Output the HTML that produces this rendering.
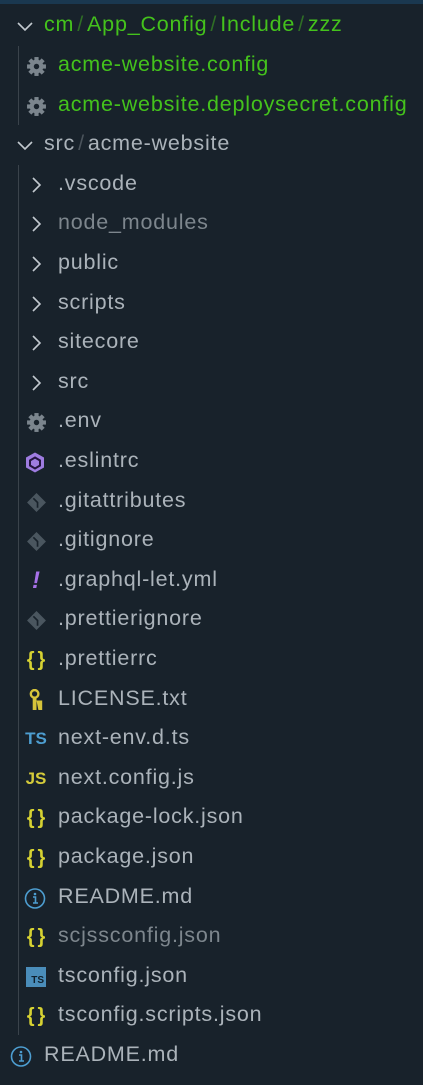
<!DOCTYPE html>
<html><head><meta charset="utf-8"><style>
html,body{margin:0;padding:0;background:#18222b;width:423px;height:1085px;overflow:hidden}
body{font-family:"Liberation Sans",sans-serif;font-size:21.5px;letter-spacing:0.8px;color:#abb3ba;position:relative}
.top{position:absolute;left:0;top:0;width:423px;height:4px;background:#1a3850}
.row{position:absolute;left:0;height:40px;line-height:40px;white-space:nowrap}
.guide{position:absolute;left:18px;width:1px;background:#3a434b}
.ic{position:absolute;top:0;width:22px;height:40px;display:flex;align-items:center;justify-content:center;letter-spacing:0}
.t{position:absolute;top:-2px}
.g{color:#44c21c}
.sl{color:#2f6e25;margin:0 3px}
.sl2{color:#4a535b;margin:0 3px}
.dim{color:#7d868d}
.br{color:#d6d232;font-weight:bold;font-size:20px;letter-spacing:3px;margin-left:3px}
</style></head><body>
<div class="top"></div>
<div class="guide" style="top:46px;height:79px"></div>
<div class="guide" style="top:165px;height:870px"></div>

<div class="row" style="top:6px;width:423px">
<svg class="ic" style="left:14px" viewBox="0 0 22 40"><path d="M4 17l7 7 7-7" stroke="#c2c9cf" stroke-width="1.6" fill="none"/></svg>
<span class="t g" style="left:44px">cm<span class="sl">/</span>App_Config<span class="sl">/</span>Include<span class="sl">/</span>zzz</span></div>

<div id="rows"></div>
<script>
var gear='<svg viewBox="0 0 20 20" width="21" height="21"><g fill="#7b858d"><circle cx="10" cy="10" r="6.5"/><rect x="8" y="1" width="4" height="18"/><rect x="1" y="8" width="18" height="4"/><rect x="8" y="1" width="4" height="18" transform="rotate(45 10 10)"/><rect x="8" y="1" width="4" height="18" transform="rotate(-45 10 10)"/></g><circle cx="10" cy="10" r="2.6" fill="#18222b"/></svg>';
var chev='<svg viewBox="0 0 22 40" width="22" height="40"><path d="M8 13l7 7-7 7" stroke="#c2c9cf" stroke-width="1.6" fill="none"/></svg>';
var br='<span class="br">{}</span>';
var git='<svg viewBox="0 0 20 20" width="21" height="21"><path d="M10 1l9 9-9 9-9-9z" fill="#4a565f"/><path d="M7 6l4 4v5" stroke="#18222b" stroke-width="1.6" fill="none"/></svg>';
var esl='<svg viewBox="0 0 22 22" width="23" height="23"><path d="M11 1l9 5v10l-9 5-9-5V6z" fill="#9e7ce0"/><path d="M11 6l5 3v5l-5 3-5-3V9z" fill="none" stroke="#24153f" stroke-width="2"/></svg>';
var info='<svg viewBox="0 0 22 22" width="23" height="23"><circle cx="11" cy="11" r="9.5" fill="none" stroke="#4d9ed1" stroke-width="1.6"/><circle cx="11" cy="6.5" r="1.3" fill="#4d9ed1"/><path d="M9 9.5h2.5v6M9 15.5h5" stroke="#4d9ed1" stroke-width="1.6" fill="none"/></svg>';
var items=[
[58,25,gear,'acme-website.config','g'],
[58,25,gear,'acme-website.deploysecret.config','g'],
[44,14,'chevd','src<span class="sl2">/</span>acme-website',''],
[58,25,chev,'.vscode',''],
[58,25,chev,'node_modules','dim'],
[58,25,chev,'public',''],
[58,25,chev,'scripts',''],
[58,25,chev,'sitecore',''],
[58,25,chev,'src',''],
[58,25,gear,'.env',''],
[58,24,esl,'.eslintrc',''],
[58,25,git,'.gitattributes',''],
[58,25,git,'.gitignore',''],
[58,25,'<span style="color:#a671e8;font-style:italic;font-weight:bold;font-size:24px">!</span>','.graphql-let.yml',''],
[58,25,git,'.prettierignore',''],
[58,25,br,'.prettierrc',''],
[58,25,'<svg viewBox="0 0 20 24" width="19" height="23"><circle cx="8" cy="5" r="4" fill="none" stroke="#d6c43a" stroke-width="2.5"/><path d="M6 9h4v13H6zM10 12h6v10h-4z" fill="#d6c43a"/></svg>','LICENSE.txt',''],
[58,25,'<span style="color:#4d9ed1;font-weight:bold;font-size:17px">TS</span>','next-env.d.ts',''],
[58,25,'<span style="color:#d4cb3a;font-weight:bold;font-size:17px">JS</span>','next.config.js',''],
[58,25,br,'package-lock.json',''],
[58,25,br,'package.json',''],
[58,24,info,'README.md',''],
[58,25,br,'scjssconfig.json','dim'],
[58,25,'<span style="display:inline-block;width:20px;height:20px;background:#4a8dba;color:#10212e;font-size:10px;font-weight:bold;line-height:28px;text-align:right;box-sizing:border-box;padding-right:2px">TS</span>','tsconfig.json',''],
[58,25,br,'tsconfig.scripts.json',''],
[44,10,info,'README.md','']
];
var h='',y=46;
items.forEach(function(it){
 var ic=it[2]=='chevd'?'<svg viewBox="0 0 22 40" width="22" height="40"><path d="M4 17l7 7 7-7" stroke="#c2c9cf" stroke-width="1.6" fill="none"/></svg>':it[2];
 h+='<div class="row" style="top:'+Math.round(y)+'px;width:423px"><div class="ic" style="left:'+it[1]+'px">'+ic+'</div><span class="t '+it[4]+'" style="left:'+it[0]+'px">'+it[3]+'</span></div>';
 y+=39.6;
});
document.getElementById('rows').innerHTML=h;
</script>
</body></html>
